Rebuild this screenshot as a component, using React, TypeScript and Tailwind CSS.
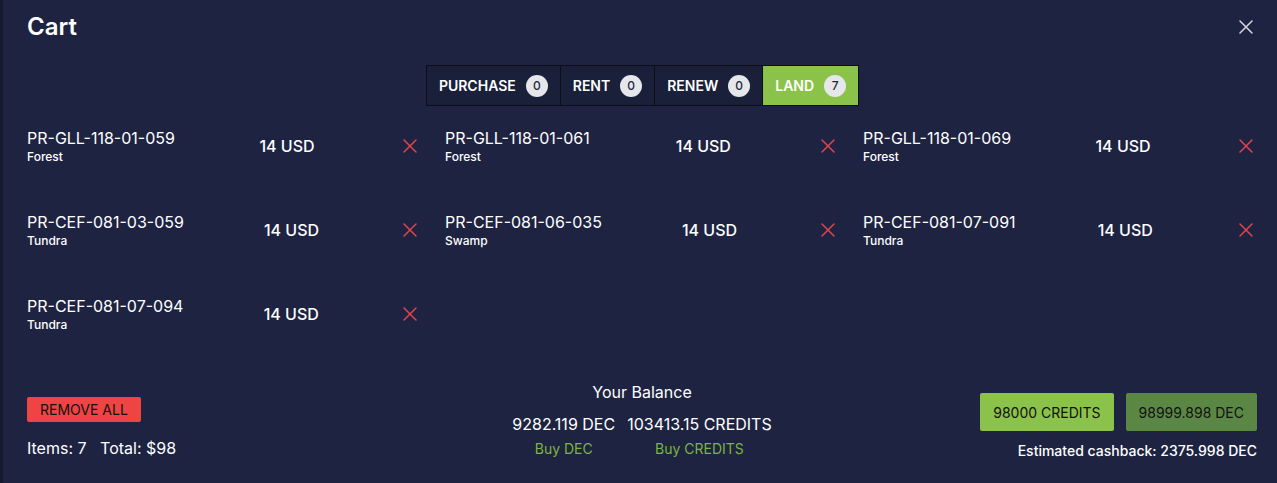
import React from "react";

const items = [
  { id: "PR-GLL-118-01-059", biome: "Forest" },
  { id: "PR-GLL-118-01-061", biome: "Forest" },
  { id: "PR-GLL-118-01-069", biome: "Forest" },
  { id: "PR-CEF-081-03-059", biome: "Tundra" },
  { id: "PR-CEF-081-06-035", biome: "Swamp" },
  { id: "PR-CEF-081-07-091", biome: "Tundra" },
  { id: "PR-CEF-081-07-094", biome: "Tundra" },
];

const tabs = [
  { label: "PURCHASE", count: 0, active: false },
  { label: "RENT", count: 0, active: false },
  { label: "RENEW", count: 0, active: false },
  { label: "LAND", count: 7, active: true },
];

function XIcon({ className }: { className?: string }) {
  return (
    <svg width="14" height="14" viewBox="0 0 14 14" className={className} fill="none">
      <path d="M1 1L13 13M13 1L1 13" stroke="currentColor" strokeWidth="1.5" strokeLinecap="round" />
    </svg>
  );
}

export default function App() {
  return (
    <div
      className="min-h-[483px] w-full flex bg-[#161a30]"
      style={{ fontFamily: "Inter, 'Noto Sans', sans-serif" }}
    >
      <div className="ml-[3px] flex-1 bg-[#1d2341] text-white pl-[24px] pr-[20px] pt-[12px] flex flex-col">
        <div className="flex items-center justify-between h-[30px]">
          <h1 className="text-[24px] font-semibold leading-none">Cart</h1>
          <button className="text-[#d6d8e0] mr-[4px]">
            <XIcon />
          </button>
        </div>

        <div className="flex justify-center mt-[23px]">
          <div className="flex ml-[1px]">
            {tabs.map((t) => (
              <div
                key={t.label}
                className={`h-[41px] flex items-center gap-[10px] px-[12px] border border-[#0b0d18] text-[14px] font-semibold ${
                  t.active ? "bg-[#8bc34a] text-white" : "bg-[#1a1f3a] text-white"
                } -ml-px first:ml-0`}
              >
                <span>{t.label}</span>
                <span className="w-[22px] h-[22px] rounded-full bg-[#e5e7eb] text-[#1f2937] text-[12px] font-medium flex items-center justify-center">
                  {t.count}
                </span>
              </div>
            ))}
          </div>
        </div>

        <div className="grid grid-cols-3 gap-x-[24px] gap-y-[44px] mt-[20px]">
          {items.map((it) => (
            <div key={it.id} className="flex items-center justify-between h-[40px]">
              <div className="flex flex-col">
                <span className="text-[16px] leading-[22px]">{it.id}</span>
                <span className="text-[12px] leading-[16px] font-medium">{it.biome}</span>
              </div>
              <span className="text-[16px] font-medium">14 USD</span>
              <button className="text-[#e0454d] p-[4px]">
                <XIcon />
              </button>
            </div>
          ))}
        </div>

        <div className="flex-1" />

        <div className="flex items-start justify-between pb-[21px]">
          <div className="flex flex-col pt-[28px] w-[300px]">
            <button className="self-start bg-[#ef4444] text-[#111] text-[14px] h-[25px] px-[13px] rounded-[2px]">
              REMOVE ALL
            </button>
            <div className="text-[16px] mt-[14px]">
              Items: 7 &nbsp; Total: $98
            </div>
          </div>

          <div className="flex flex-col items-center pt-[11px]">
            <div className="text-[16px] leading-[24px]">Your Balance</div>
            <div className="flex gap-[12px] text-[16px] mt-[8px] leading-[24px]">
              <div className="flex flex-col items-center">
                <span>9282.119 DEC</span>
                <span className="text-[14px] text-[#7cb342] leading-[26px]">Buy DEC</span>
              </div>
              <div className="flex flex-col items-center">
                <span>103413.15 CREDITS</span>
                <span className="text-[14px] text-[#7cb342] leading-[26px]">Buy CREDITS</span>
              </div>
            </div>
          </div>

          <div className="flex flex-col items-end pt-[24px] w-[300px]">
            <div className="flex gap-[12px]">
              <button className="h-[38px] px-[13px] bg-[#8bc34a] text-[#111] text-[14px] rounded-[2px]">
                98000 CREDITS
              </button>
              <button className="h-[38px] px-[13px] bg-[#5b8745] text-[#111] text-[14px] rounded-[2px]">
                98999.898 DEC
              </button>
            </div>
            <div className="text-[14px] mt-[9px] font-medium">Estimated cashback: 2375.998 DEC</div>
          </div>
        </div>
      </div>
    </div>
  );
}
